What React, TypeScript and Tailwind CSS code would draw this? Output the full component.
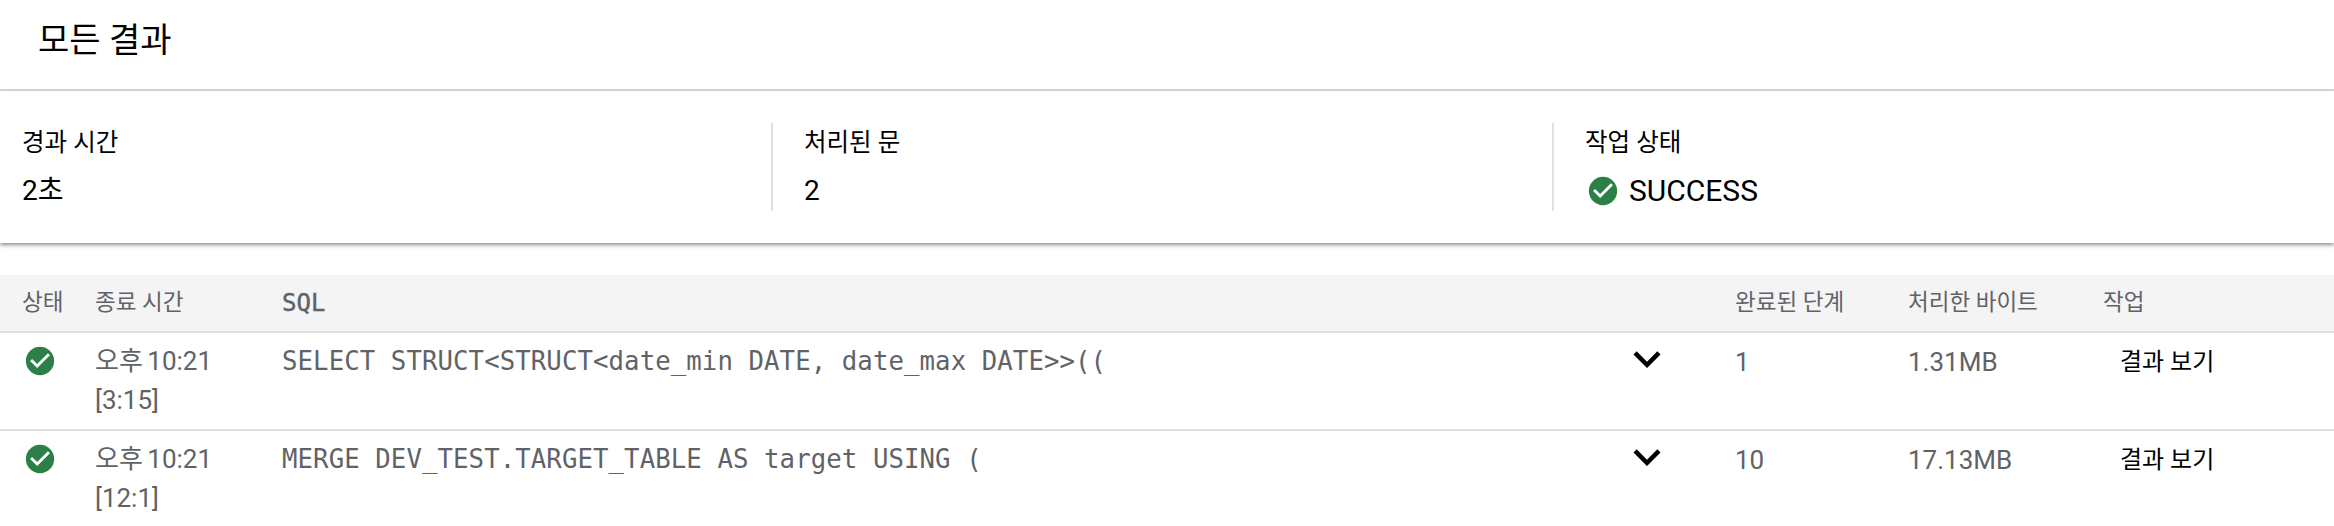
const sans = "font-['Roboto','Noto_Sans_CJK_KR',sans-serif]";

const rows = [
  { time: '오후 10:21', pos: '[3:15]', sql: 'SELECT STRUCT<STRUCT<date_min DATE, date_max DATE>>((', stages: '1', bytes: '1.31MB' },
  { time: '오후 10:21', pos: '[12:1]', sql: 'MERGE DEV_TEST.TARGET_TABLE AS target USING (', stages: '10', bytes: '17.13MB' },
];

function CheckCircle() {
  return (
    <svg viewBox="0 0 24 24" className="w-[34px] h-[34px] flex-shrink-0">
      <path fill="#2b7f47" d="M12 2C6.48 2 2 6.48 2 12s4.48 10 10 10 10-4.48 10-10S17.52 2 12 2z" />
      <path fill="#fff" d="M10 17l-5-5 1.41-1.41L10 14.17l7.59-7.59L19 8l-9 9z" />
    </svg>
  );
}

function Chevron() {
  return (
    <svg viewBox="0 0 24 24" className="w-[54px] h-[54px] flex-shrink-0 -mt-[1px]" fill="#000">
      <path d="M16.59 8.59L12 13.17 7.41 8.59 6 10l6 6 6-6z" />
    </svg>
  );
}

function Stat({ label, children, first }: { label: string; children: React.ReactNode; first?: boolean }) {
  return (
    <div className={first ? 'w-[771px] h-[88px] pl-[22px]' : 'w-[781px] h-[88px] pl-[31px] border-l-2 border-[#e0e0e0]'}>
      <div className="text-[24.5px] leading-[38px] mt-[1px] text-black">{label}</div>
      <div className="text-[28px] leading-[38px] mt-[10px] text-black flex items-center">{children}</div>
    </div>
  );
}

export default function App() {
  return (
    <div className={`w-[2334px] h-[526px] overflow-hidden bg-white ${sans}`}>
      <div className="h-[91px] border-b-2 border-[#d9d9d9] pl-[38px] pt-[18px] text-[34px] leading-[44px] text-black">모든 결과</div>
      <div className="h-[152px] flex pt-[32px] shadow-[0_2px_4px_rgba(0,0,0,0.45)]">
        <Stat label="경과 시간" first>2초</Stat>
        <Stat label="처리된 문">2</Stat>
        <Stat label="작업 상태">
          <span className="mr-[9px] ml-[1px]"><CheckCircle /></span>
          <span className="text-[30px]">SUCCESS</span>
        </Stat>
      </div>
      <div className="mt-[32px] h-[58px] bg-[#f4f4f4] border-b-2 border-[#e0e0e0] grid grid-cols-[95px_188px_1452px_173px_195px_1fr] items-center text-[22.5px] text-[#5f6368]">
        <div className="pl-[22px]">상태</div>
        <div>종료 시간</div>
        <div className="font-['DejaVu_Sans_Mono',monospace] text-[24px] -ml-[1px] [-webkit-text-stroke:0.4px]">SQL</div>
        <div>완료된 단계</div>
        <div>처리한 바이트</div>
        <div>작업</div>
      </div>
      {rows.map((r) => (
        <div key={r.pos} className="h-[98px] border-b-2 border-[#e0e0e0] grid grid-cols-[95px_188px_1452px_173px_195px_1fr] text-[26px] text-[#5f6368]">
          <div className="pl-[23px] pt-[11px]"><CheckCircle /></div>
          <div className="pt-[9px] leading-[39px] [word-spacing:-2px]">
            <div>{r.time}</div>
            <div>{r.pos}</div>
          </div>
          <div className="flex justify-between pr-[61px]">
            <div className="font-['DejaVu_Sans_Mono',monospace] text-[25.7px] tracking-[0.085px] -ml-[1px] pt-[8px] leading-[40px]">{r.sql}</div>
            <Chevron />
          </div>
          <div className="pt-[9px] leading-[40px]">{r.stages}</div>
          <div className="pt-[9px] leading-[40px]">{r.bytes}</div>
          <div className="pl-[17px] pt-[9px] leading-[40px] text-[24px] text-black">결과 보기</div>
        </div>
      ))}
    </div>
  );
}
